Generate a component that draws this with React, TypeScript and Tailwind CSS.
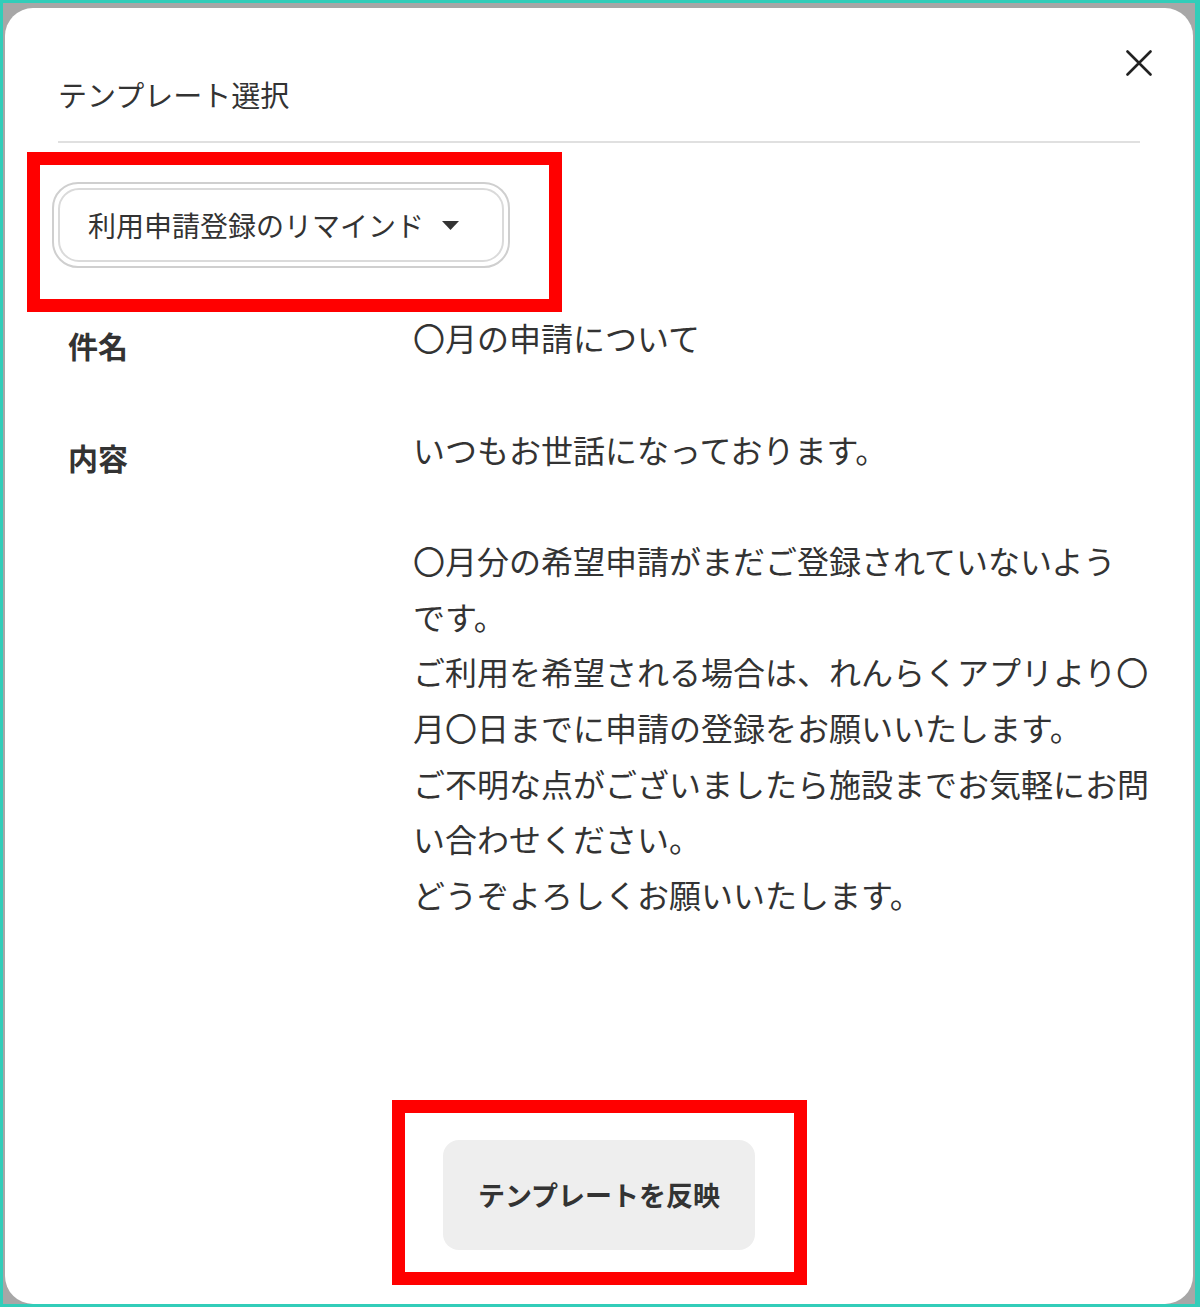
const body = `いつもお世話になっております。

〇月分の希望申請がまだご登録されていないよう
です。
ご利用を希望される場合は、れんらくアプリより〇
月〇日までに申請の登録をお願いいたします。
ご不明な点がございましたら施設までお気軽にお問
い合わせください。
どうぞよろしくお願いいたします。`;

const CloseIcon = () => (
  <svg width="26" height="26" viewBox="0 0 26 26" fill="none">
    <path d="M1.5 1.5 24.5 24.5M24.5 1.5 1.5 24.5" stroke="#222" strokeWidth="2.6" strokeLinecap="round" />
  </svg>
);

const Caret = () => (
  <svg width="17" height="9" viewBox="0 0 17 9">
    <path d="M0 0h17L8.5 9z" fill="#333" />
  </svg>
);

const App = () => {
  return (
    <div className="w-[1200px] h-[1307px] border-[3px] border-r-[5px] border-[#32cdb9] bg-[#a7a7a7] pt-[5px] pl-[2px] pr-[2px] font-['Noto_Sans_CJK_JP',sans-serif] text-[#333]">
      <div className="relative h-full bg-white rounded-[28px] flex flex-col px-[53px] pb-[19px]">
        <button className="absolute top-[42px] right-[41px]">
          <CloseIcon />
        </button>

        {/* header */}
        <h2 className="pt-[66px] text-[29px] leading-[40px] font-normal">テンプレート選択</h2>
        <div className="mt-[27px] h-[2px] bg-[#e0e0e0]" />

        {/* template picker */}
        <div className="mt-[9px] -ml-[31px] w-[535px] h-[160px] border-[13px] border-[#ff0000] pt-[17px] pl-[12px]">
          <div className="w-[458px] h-[86px] rounded-[26px] border-2 border-[#cfcfcf] p-[4px]">
            <div className="h-full rounded-[21px] border-2 border-[#dadada] flex items-center pl-[28px] gap-[18px]">
              <span className="text-[28px] leading-none">利用申請登録のリマインド</span>
              <Caret />
            </div>
          </div>
        </div>

        {/* preview */}
        <div className="grid grid-cols-[355px_1fr]">
          <div className="pl-[10px] pt-[8px] text-[30px] leading-[50px] font-bold">件名</div>
          <div className="text-[32px] leading-[50px]">〇月の申請について</div>

          <div className="mt-[52px] pl-[10px] pt-[8px] text-[30px] leading-[55.6px] font-bold">内容</div>
          <div className="mt-[52px] text-[32px] leading-[55.6px] whitespace-pre">{body}</div>
        </div>

        {/* apply */}
        <div className="mt-auto self-center w-[415px] h-[185px] border-[13px] border-[#ff0000] pt-[5px] flex items-center justify-center">
          <button className="w-[312px] h-[110px] rounded-[16px] bg-[#eeeeee] text-[27px] font-bold text-[#333]">
            テンプレートを反映
          </button>
        </div>
      </div>
    </div>
  );
};

export default App;
